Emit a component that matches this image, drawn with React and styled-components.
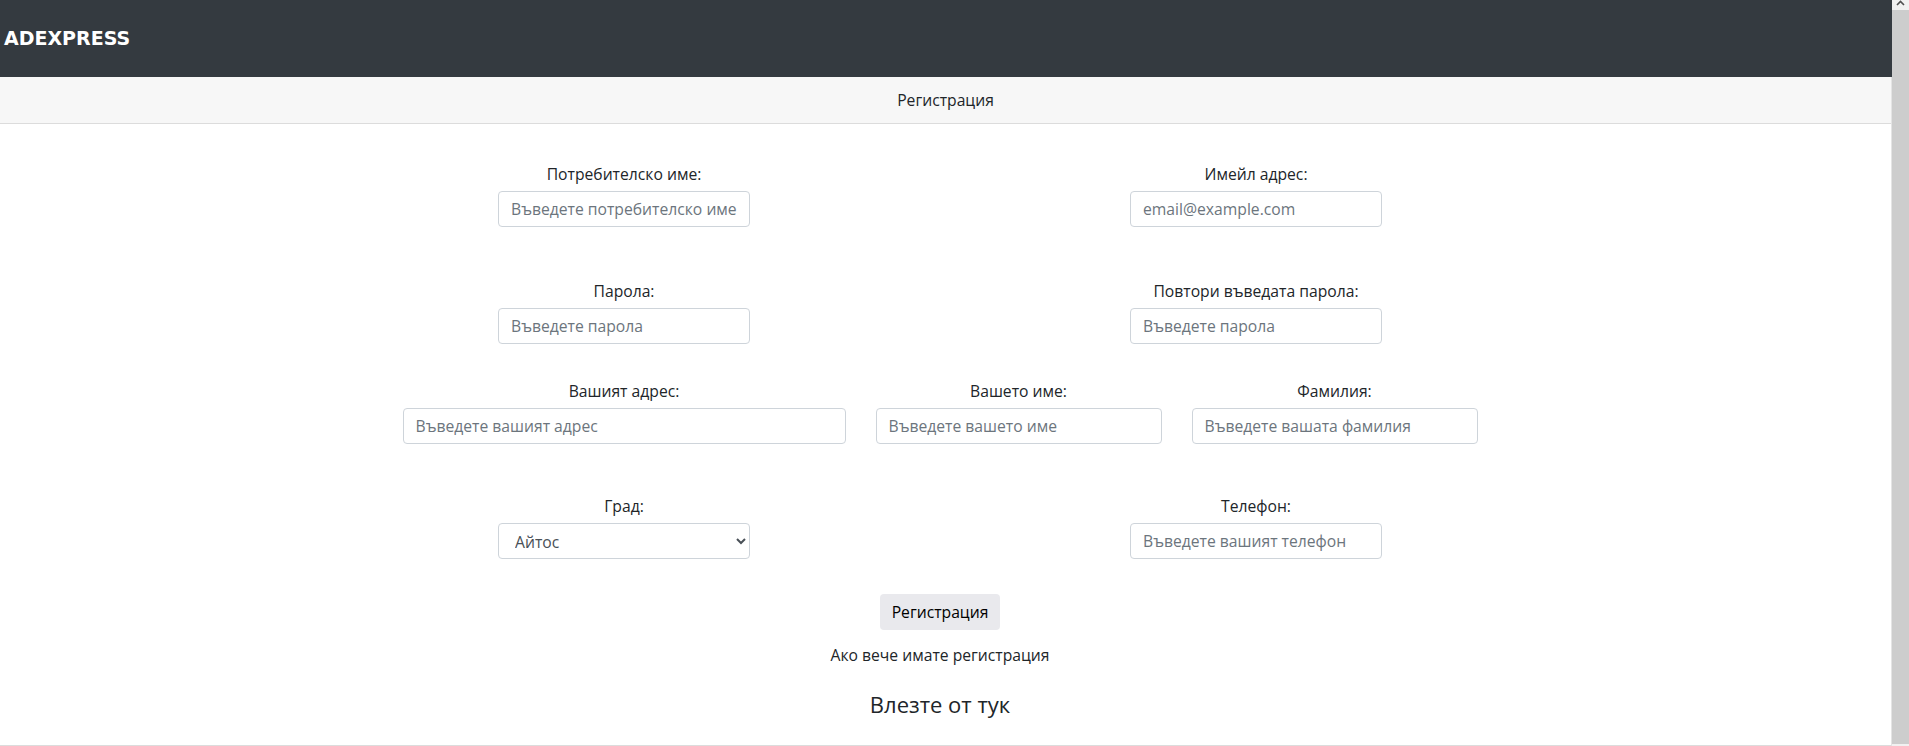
import React from "react";
import styled, { createGlobalStyle } from "styled-components";

const GlobalStyle = createGlobalStyle`
  html, body {
    margin: 0;
    padding: 0;
    overflow: hidden;
  }
  body {
    font-family: "Open Sans", "Noto Sans", sans-serif;
    font-size: 15.7px;
    color: #212529;
    background: #fff;
  }
  * {
    box-sizing: border-box;
  }
`;

const Shell = styled.div`
  display: flex;
  height: 746px;
`;

const Page = styled.div`
  flex: 1;
  min-width: 0;
`;

// the window's scroll rail, drawn as in the screenshot
const ScrollRail = styled.div`
  width: 17px;
  display: flex;
  flex-direction: column;
  background: #f1f1f1;
`;

const RailArrow = styled.div`
  height: 10px;
  display: flex;
  justify-content: center;
  align-items: flex-start;
`;

const RailThumb = styled.div`
  flex: 1;
  background: #cdcdcd;
  margin-bottom: 2px;
`;

const Navbar = styled.nav`
  height: 77px;
  background: #343a40;
  display: flex;
  align-items: center;
  padding: 0 4px 2px;
`;

const Brand = styled.a`
  font-family: "DejaVu Sans", Verdana, sans-serif;
  font-weight: bold;
  font-size: 19px;
  color: #fff;
  text-decoration: none;
`;

const Card = styled.section`
  border-bottom: 1px solid #dcdcdc;
  border-right: 1px solid #e4e4e4;
`;

const CardHeader = styled.header`
  height: 47px;
  background: #f7f7f7;
  border-bottom: 1px solid #dcdcdc;
  display: flex;
  align-items: center;
  justify-content: center;
  padding-bottom: 1px;
`;

const CardBody = styled.div`
  padding: 38px 0 25px;
`;

const Form = styled.form`
  width: 1086px;
  margin: 0 auto;
  padding-right: 11px;
`;

const Row = styled.div`
  display: grid;
  grid-template-columns: ${(p) => p.$cols};
  column-gap: ${(p) => p.$gap || 0}px;
  margin-bottom: ${(p) => p.$after}px;
`;

const Group = styled.div`
  display: flex;
  flex-direction: column;
  align-items: center;
  grid-column: ${(p) => p.$col || "auto"};
`;

const Label = styled.label`
  line-height: 24px;
  margin-bottom: 5px;
`;

const Input = styled.input`
  width: ${(p) => (p.$full ? "100%" : "252px")};
  height: 36px;
  padding: 6px 12px;
  border: 1px solid #ced4da;
  border-radius: 4px;
  font-family: inherit;
  font-size: 15.7px;
  color: #495057;
  &::placeholder {
    color: #6c757d;
  }
`;

const Select = styled.select`
  width: 252px;
  height: 36px;
  padding: 6px 12px;
  border: 1px solid #ced4da;
  border-radius: 4px;
  font-family: inherit;
  font-size: 15.7px;
  color: #495057;
  background: #fff;
`;

const Actions = styled.div`
  display: flex;
  flex-direction: column;
  align-items: center;
`;

const Button = styled.button`
  height: 36px;
  padding: 0 12px;
  border: none;
  border-radius: 4px;
  background: #e9e9ed;
  font-family: inherit;
  font-size: 15.7px;
  color: #000;
  margin-bottom: 13px;
`;

const Note = styled.p`
  margin: 0 0 21px;
  line-height: 24px;
`;

const LoginLink = styled.a`
  font-size: 22px;
  line-height: 32px;
  color: #212529;
  text-decoration: none;
`;

const cities = ["Айтос", "Бургас", "Варна", "Пловдив", "София"];

export default function App() {
  return (
    <Shell>
      <GlobalStyle />
      <Page>
        <Navbar>
          <Brand href="#">ADEXPRESS</Brand>
        </Navbar>
        <Card>
          <CardHeader>Регистрация</CardHeader>
          <CardBody>
            <Form onSubmit={(e) => e.preventDefault()}>
              <Row $cols="443px 1fr 443px" $after={52}>
                <Group $col="1">
                  <Label>Потребителско име:</Label>
                  <Input placeholder="Въведете потребителско име" />
                </Group>
                <Group $col="3">
                  <Label>Имейл адрес:</Label>
                  <Input type="email" placeholder="email@example.com" />
                </Group>
              </Row>
              <Row $cols="443px 1fr 443px" $after={35}>
                <Group $col="1">
                  <Label>Парола:</Label>
                  <Input type="password" placeholder="Въведете парола" />
                </Group>
                <Group $col="3">
                  <Label>Повтори въведата парола:</Label>
                  <Input type="password" placeholder="Въведете парола" />
                </Group>
              </Row>
              <Row $cols="443px 1fr 1fr" $gap={30} $after={50}>
                <Group>
                  <Label>Вашият адрес:</Label>
                  <Input $full placeholder="Въведете вашият адрес" />
                </Group>
                <Group>
                  <Label>Вашето име:</Label>
                  <Input $full placeholder="Въведете вашето име" />
                </Group>
                <Group>
                  <Label>Фамилия:</Label>
                  <Input $full placeholder="Въведете вашата фамилия" />
                </Group>
              </Row>
              <Row $cols="443px 1fr 443px" $after={35}>
                <Group $col="1">
                  <Label>Град:</Label>
                  <Select defaultValue="Айтос">
                    {cities.map((c) => (
                      <option key={c}>{c}</option>
                    ))}
                  </Select>
                </Group>
                <Group $col="3">
                  <Label>Телефон:</Label>
                  <Input type="tel" placeholder="Въведете вашият телефон" />
                </Group>
              </Row>
              <Actions>
                <Button type="submit">Регистрация</Button>
                <Note>Ако вече имате регистрация</Note>
                <LoginLink href="#">Влезте от тук</LoginLink>
              </Actions>
            </Form>
          </CardBody>
        </Card>
      </Page>
      <ScrollRail>
        <RailArrow>
          <svg width="9" height="6" viewBox="0 0 9 6">
            <path d="M1 5 L4.5 1.5 L8 5" fill="none" stroke="#505050" strokeWidth="1.6" />
          </svg>
        </RailArrow>
        <RailThumb />
      </ScrollRail>
    </Shell>
  );
}
